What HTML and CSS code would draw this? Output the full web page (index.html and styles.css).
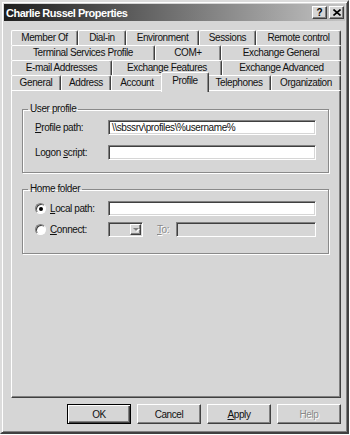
FILE: index.html
```html
<!DOCTYPE html>
<html lang="en">
<head>
  <meta charset="UTF-8" />
  <title>Charlie Russel Properties</title>
  <link rel="stylesheet" href="styles.css">
</head>
<body>

  <div class="window">
    <!-- Caption -->
    <div class="titlebar">
      <span class="title">Charlie Russel Properties</span>
      <div class="cap-btns">
        <span class="cap-btn">?</span>
        <span class="cap-btn">
          <svg width="8" height="7" viewBox="0 0 8 7"><path d="M0.5 0.5 L7.5 6.5 M7.5 0.5 L0.5 6.5" stroke="#000" stroke-width="1.6" fill="none"/></svg>
        </span>
      </div>
    </div>

    <!-- Tabs, back rows first -->
    <div class="tabs">
      <div class="tab-row row1">
        <span class="tab">Member Of</span>
        <span class="tab">Dial-in</span>
        <span class="tab">Environment</span>
        <span class="tab">Sessions</span>
        <span class="tab">Remote control</span>
      </div>
      <div class="tab-row row2">
        <span class="tab">Terminal Services Profile</span>
        <span class="tab">COM+</span>
        <span class="tab">Exchange General</span>
      </div>
      <div class="tab-row row3">
        <span class="tab">E-mail Addresses</span>
        <span class="tab">Exchange Features</span>
        <span class="tab">Exchange Advanced</span>
      </div>
      <div class="tab-row row4">
        <span class="tab">General</span>
        <span class="tab">Address</span>
        <span class="tab">Account</span>
        <span class="tab active">Profile</span>
        <span class="tab">Telephones</span>
        <span class="tab">Organization</span>
      </div>
    </div>

    <div class="panel">
      <fieldset class="group user-profile">
        <legend>User profile</legend>
        <div class="row">
          <span class="label"><span><u>P</u>rofile path:</span></span>
          <span class="textbox">\\sbssrv\profiles\%username%</span>
        </div>
        <div class="row">
          <span class="label"><span>Logon <u>s</u>cript:</span></span>
          <span class="textbox"></span>
        </div>
      </fieldset>

      <fieldset class="group home-folder">
        <legend>Home folder</legend>
        <div class="row">
          <span class="label"><span class="radio checked"><span class="dot"></span></span><span><u>L</u>ocal path:</span></span>
          <span class="textbox"></span>
        </div>
        <div class="row">
          <span class="label"><span class="radio"></span><span><u>C</u>onnect:</span></span>
          <span class="combo"><span class="combo-btn"><span class="arrow"></span></span></span>
          <span class="to disabled"><u>T</u>o:</span>
          <span class="textbox short off"></span>
        </div>
      </fieldset>
    </div>

    <div class="buttons">
      <span class="btn default">OK</span>
      <span class="btn">Cancel</span>
      <span class="btn"><u>A</u>pply</span>
      <span class="btn disabled">Help</span>
    </div>
  </div>

</body>
</html>
```

FILE: styles.css
```css
/* Base */
body {
  margin: 0;
  background: #fff;
  font-family: 'Liberation Sans', Arial, sans-serif;
  font-size: 10px;
  letter-spacing: -0.4px;
  color: #111;
}

/* Window frame */
.window {
  width: 349px;
  height: 434px;
  box-sizing: border-box;
  background: #d6d6d6;
  border: 2px solid;
  border-color: #dcdcdc #404040 #404040 #dcdcdc;
  box-shadow: inset 1px 1px 0 #fff, inset -1px -1px 0 #808080;
  padding: 2px;
  display: flex;
  flex-direction: column;
}

/* Caption */
.titlebar {
  height: 17px;
  display: flex;
  align-items: center;
  justify-content: space-between;
  padding: 0 1px 0 2px;
  background: linear-gradient(to right, #1e1e1e, #c4c4c4);
  color: #fff;
}
.title {
  font-weight: bold;
  font-size: 11px;
  letter-spacing: -0.5px;
}
.cap-btns {
  display: flex;
  gap: 2px;
}
.cap-btn {
  width: 15px;
  height: 13px;
  box-sizing: border-box;
  background: #d6d6d6;
  border: 1px solid;
  border-color: #fff #404040 #404040 #fff;
  box-shadow: inset -1px -1px 0 #808080;
  color: #000;
  font-weight: bold;
  font-size: 10px;
  letter-spacing: 0;
  display: flex;
  align-items: center;
  justify-content: center;
}

/* Tabs */
.tabs {
  margin: 9px 4px 0 7px;
}
.tab-row {
  display: grid;
  height: 15px;
}
.row1 { grid-template-columns: 67px 48px 73px 57px 1fr; }
.row2 { grid-template-columns: 144px 66px 1fr; }
.row3 { grid-template-columns: 101px 110px 1fr; }
.row4 { grid-template-columns: 50px 50px 52px 44px 64px 1fr; }

.tab {
  border-top: 1px solid #fff;
  border-left: 1px solid #fff;
  border-right: 1px solid #404040;
  box-shadow: inset -1px 0 0 #8a8a8a;
  border-radius: 2px 2px 0 0;
  background: #d6d6d6;
  text-align: center;
  line-height: 14px;
  white-space: nowrap;
}
.tab.active {
  position: relative;
  z-index: 1;
  margin: -3px -2px -2px;
  line-height: 16px;
}

/* Page */
.panel {
  margin: 0 4px 0 7px;
  height: 308px;
  box-sizing: border-box;
  border: 1px solid;
  border-color: #fff #404040 #404040 #fff;
  box-shadow: inset -1px -1px 0 #808080;
  padding: 12px 11px 0 10px;
}

.group {
  margin: 0;
  min-width: 0;
  border: 1px solid #8a8a8a;
  box-shadow: 1px 1px 0 #fff, inset 1px 1px 0 #fff;
  padding: 5px 11px 12px 12px;
}
.group legend {
  margin-left: -7px;
  padding: 0 2px;
  line-height: 12px;
}
.home-folder {
  margin-top: 10px;
  padding-top: 6px;
  padding-bottom: 16px;
}

.row {
  display: flex;
  align-items: center;
  height: 15px;
}
.user-profile .row + .row {
  margin-top: 10px;
}
.home-folder .row + .row {
  margin-top: 6px;
}
.label {
  width: 73px;
  flex-shrink: 0;
  display: flex;
  align-items: center;
  white-space: nowrap;
}

/* Edit boxes */
.textbox {
  width: 208px;
  height: 15px;
  box-sizing: border-box;
  background: #fff;
  border: 1px solid;
  border-color: #808080 #fff #fff #808080;
  box-shadow: inset 1px 1px 0 #404040, inset -1px -1px 0 #d6d6d6;
  padding: 0 3px;
  line-height: 13px;
  white-space: nowrap;
  overflow: hidden;
}
.textbox.short {
  width: 140px;
}
.textbox.off {
  background: #d6d6d6;
}

/* Radio buttons */
.radio {
  width: 11px;
  height: 11px;
  box-sizing: border-box;
  border-radius: 50%;
  border: 1px solid;
  border-color: #808080 #fff #fff #808080;
  box-shadow: inset 1px 1px 0 #404040;
  background: #fff;
  margin-right: 4px;
  display: grid;
  place-items: center;
}
.radio .dot {
  width: 4px;
  height: 4px;
  border-radius: 50%;
  background: #000;
}

/* Combo box (disabled) */
.combo {
  width: 35px;
  height: 15px;
  box-sizing: border-box;
  border: 1px solid;
  border-color: #808080 #fff #fff #808080;
  box-shadow: inset 1px 1px 0 #404040;
  background: #d6d6d6;
  display: flex;
  justify-content: flex-end;
  padding: 1px 1px 1px 0;
}
.combo-btn {
  width: 11px;
  box-sizing: border-box;
  border: 1px solid;
  border-color: #fff #404040 #404040 #fff;
  box-shadow: inset -1px -1px 0 #808080;
  display: grid;
  place-items: center;
}
.combo-btn .arrow {
  width: 0;
  height: 0;
  border-left: 3px solid transparent;
  border-right: 3px solid transparent;
  border-top: 3px solid #808080;
  filter: drop-shadow(1px 1px 0 #fff);
}

.to {
  width: 19px;
  margin-left: 14px;
}
.disabled {
  color: #8a8a8a;
  text-shadow: 1px 1px 0 #fff;
}

/* Dialog buttons */
.buttons {
  display: flex;
  justify-content: flex-end;
  gap: 6px;
  margin: 6px 4px 0 0;
}
.btn {
  width: 64px;
  height: 20px;
  box-sizing: border-box;
  border: 1px solid;
  border-color: #fff #404040 #404040 #fff;
  box-shadow: inset -1px -1px 0 #808080;
  display: flex;
  align-items: center;
  justify-content: center;
}
.btn.default {
  border-color: #000;
  box-shadow: inset 1px 1px 0 #fff, inset -1px -1px 0 #404040, inset -2px -2px 0 #808080;
}
```
